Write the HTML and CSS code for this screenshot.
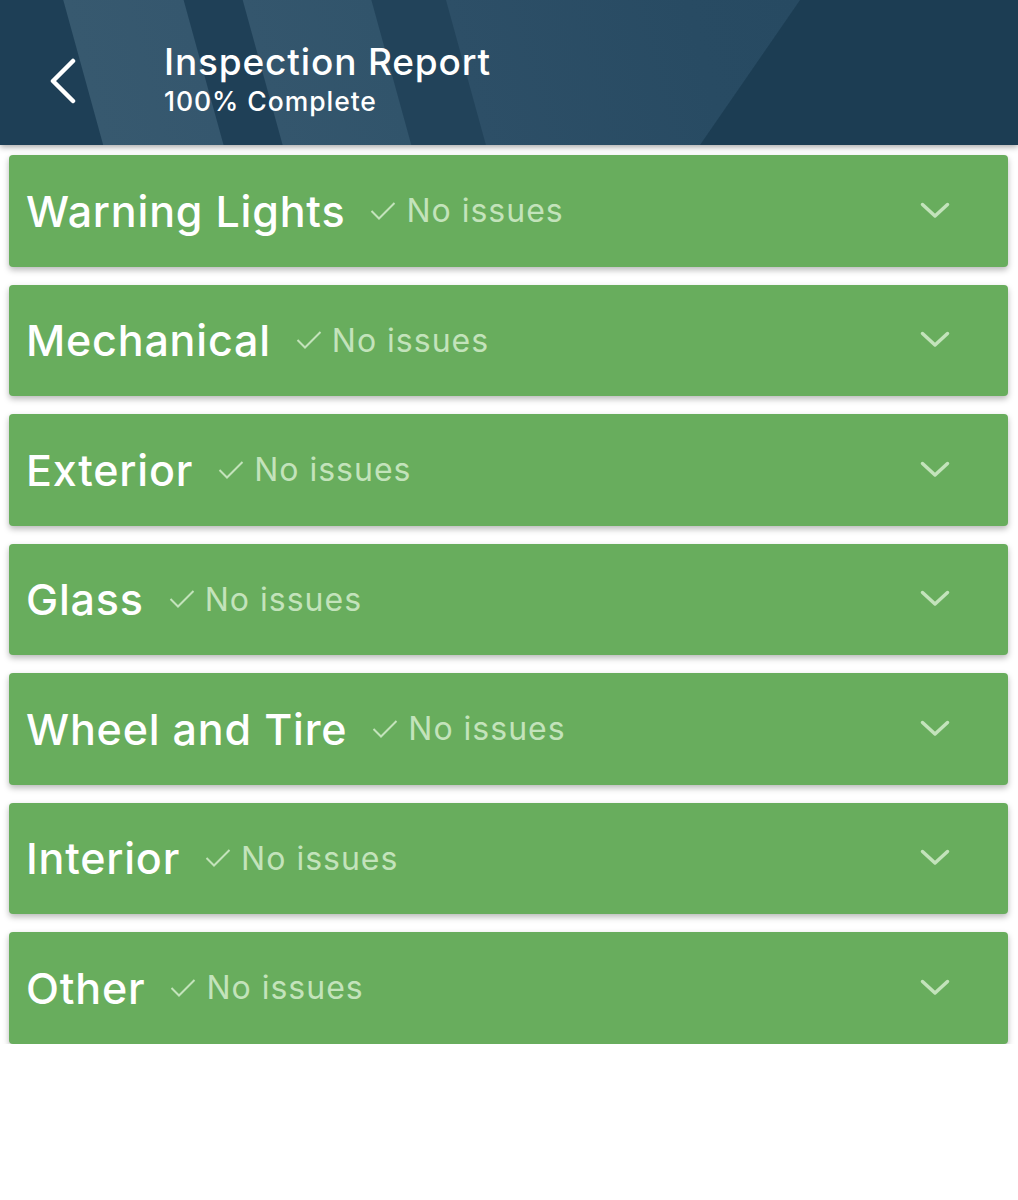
FILE: index.html
```html
<!DOCTYPE html>
<html>
<head>
<meta charset="utf-8">
<title>Inspection Report</title>
<link rel="stylesheet" href="styles.css">
</head>
<body>
<header class="topbar">
  <button class="back" aria-label="Back">
    <svg width="30" height="46" viewBox="0 0 30 46"><polyline points="25,3 5,23 25,43" fill="none" stroke="#ffffff" stroke-width="4.5" stroke-linecap="round" stroke-linejoin="round"/></svg>
  </button>
  <div class="titles">
    <div class="title">Inspection Report</div>
    <div class="subtitle">100% Complete</div>
  </div>
</header>
<main class="list">
  <div class="card"><span class="name">Warning Lights</span><span class="status"><svg class="check" width="26" height="20" viewBox="0 0 26 20"><polyline points="1.5,10 9,17.5 24.5,2" fill="none" stroke="currentColor" stroke-width="2"/></svg>No issues</span><svg class="chev" width="30" height="18" viewBox="0 0 30 18"><polyline points="2.5,2.5 15,14 27.5,2.5" fill="none" stroke="currentColor" stroke-width="3.5" stroke-linecap="round" stroke-linejoin="round"/></svg></div>
  <div class="card"><span class="name">Mechanical</span><span class="status"><svg class="check" width="26" height="20" viewBox="0 0 26 20"><polyline points="1.5,10 9,17.5 24.5,2" fill="none" stroke="currentColor" stroke-width="2"/></svg>No issues</span><svg class="chev" width="30" height="18" viewBox="0 0 30 18"><polyline points="2.5,2.5 15,14 27.5,2.5" fill="none" stroke="currentColor" stroke-width="3.5" stroke-linecap="round" stroke-linejoin="round"/></svg></div>
  <div class="card"><span class="name">Exterior</span><span class="status"><svg class="check" width="26" height="20" viewBox="0 0 26 20"><polyline points="1.5,10 9,17.5 24.5,2" fill="none" stroke="currentColor" stroke-width="2"/></svg>No issues</span><svg class="chev" width="30" height="18" viewBox="0 0 30 18"><polyline points="2.5,2.5 15,14 27.5,2.5" fill="none" stroke="currentColor" stroke-width="3.5" stroke-linecap="round" stroke-linejoin="round"/></svg></div>
  <div class="card"><span class="name">Glass</span><span class="status"><svg class="check" width="26" height="20" viewBox="0 0 26 20"><polyline points="1.5,10 9,17.5 24.5,2" fill="none" stroke="currentColor" stroke-width="2"/></svg>No issues</span><svg class="chev" width="30" height="18" viewBox="0 0 30 18"><polyline points="2.5,2.5 15,14 27.5,2.5" fill="none" stroke="currentColor" stroke-width="3.5" stroke-linecap="round" stroke-linejoin="round"/></svg></div>
  <div class="card"><span class="name">Wheel and Tire</span><span class="status"><svg class="check" width="26" height="20" viewBox="0 0 26 20"><polyline points="1.5,10 9,17.5 24.5,2" fill="none" stroke="currentColor" stroke-width="2"/></svg>No issues</span><svg class="chev" width="30" height="18" viewBox="0 0 30 18"><polyline points="2.5,2.5 15,14 27.5,2.5" fill="none" stroke="currentColor" stroke-width="3.5" stroke-linecap="round" stroke-linejoin="round"/></svg></div>
  <div class="card"><span class="name">Interior</span><span class="status"><svg class="check" width="26" height="20" viewBox="0 0 26 20"><polyline points="1.5,10 9,17.5 24.5,2" fill="none" stroke="currentColor" stroke-width="2"/></svg>No issues</span><svg class="chev" width="30" height="18" viewBox="0 0 30 18"><polyline points="2.5,2.5 15,14 27.5,2.5" fill="none" stroke="currentColor" stroke-width="3.5" stroke-linecap="round" stroke-linejoin="round"/></svg></div>
  <div class="card"><span class="name">Other</span><span class="status"><svg class="check" width="26" height="20" viewBox="0 0 26 20"><polyline points="1.5,10 9,17.5 24.5,2" fill="none" stroke="currentColor" stroke-width="2"/></svg>No issues</span><svg class="chev" width="30" height="18" viewBox="0 0 30 18"><polyline points="2.5,2.5 15,14 27.5,2.5" fill="none" stroke="currentColor" stroke-width="3.5" stroke-linecap="round" stroke-linejoin="round"/></svg></div>
</main>
</body>
</html>
```
FILE: styles.css
```css
html, body {
  margin: 0;
  padding: 0;
  background: #ffffff;
  font-family: Inter, "Open Sans", "Liberation Sans", sans-serif;
}

.topbar {
  height: 145px;
  display: flex;
  align-items: center;
  box-sizing: border-box;
  padding-left: 48px;
  padding-top: 16px;
  color: #ffffff;
  background-color: #1c3d53;
  background-image:
    linear-gradient(124.6deg, rgba(28,61,83,0) 658px, #1c3d53 659px),
    linear-gradient(74.6deg,
      #1e3f56 0px, #1e3f56 99px,
      #37596f 100px, #35576e 215px,
      #1f4057 216px, #1f4057 272px,
      #34566d 273px, #31546b 396px,
      #22435a 397px, #22435a 468px,
      #2d4f67 469px, #284b63 700px, #254860 1020px);
  box-shadow: 0 2px 6px rgba(0,0,0,0.35);
  position: relative;
  z-index: 1;
}

.back {
  width: 40px;
  height: 60px;
  padding: 0;
  margin: 0;
  border: 0;
  background: none;
  display: flex;
  align-items: center;
  justify-content: flex-start;
}

.titles {
  margin-left: 76px;
  display: flex;
  flex-direction: column;
  margin-top: -2px;
}

.title {
  font-size: 37px;
  font-weight: 500;
  line-height: 40px;
  letter-spacing: 0.85px;
}

.subtitle {
  font-size: 26.5px;
  font-weight: 500;
  line-height: 32px;
  margin-top: 3px;
  letter-spacing: 0.95px;
}

.list {
  display: flex;
  flex-direction: column;
  gap: 18px;
  padding: 10px 10px 0 9px;
}

.card {
  height: 111.5px;
  box-sizing: border-box;
  background: #68ad5d;
  border-radius: 4px;
  box-shadow: 0 3px 6px rgba(0,0,0,0.28);
  display: flex;
  align-items: center;
  padding-left: 17px;
  padding-right: 58px;
  color: #ffffff;
}

.name {
  font-size: 43px;
  font-weight: 500;
  letter-spacing: 0.8px;
  white-space: nowrap;
}

.status {
  display: flex;
  align-items: center;
  margin-left: 25px;
  font-size: 32px;
  font-weight: 400;
  letter-spacing: 1px;
  color: #c3e3bb;
  white-space: nowrap;
}

.check {
  margin-right: 10px;
  color: #c3e3bb;
}

.chev {
  margin-left: auto;
  color: #c3e3bb;
}
```
